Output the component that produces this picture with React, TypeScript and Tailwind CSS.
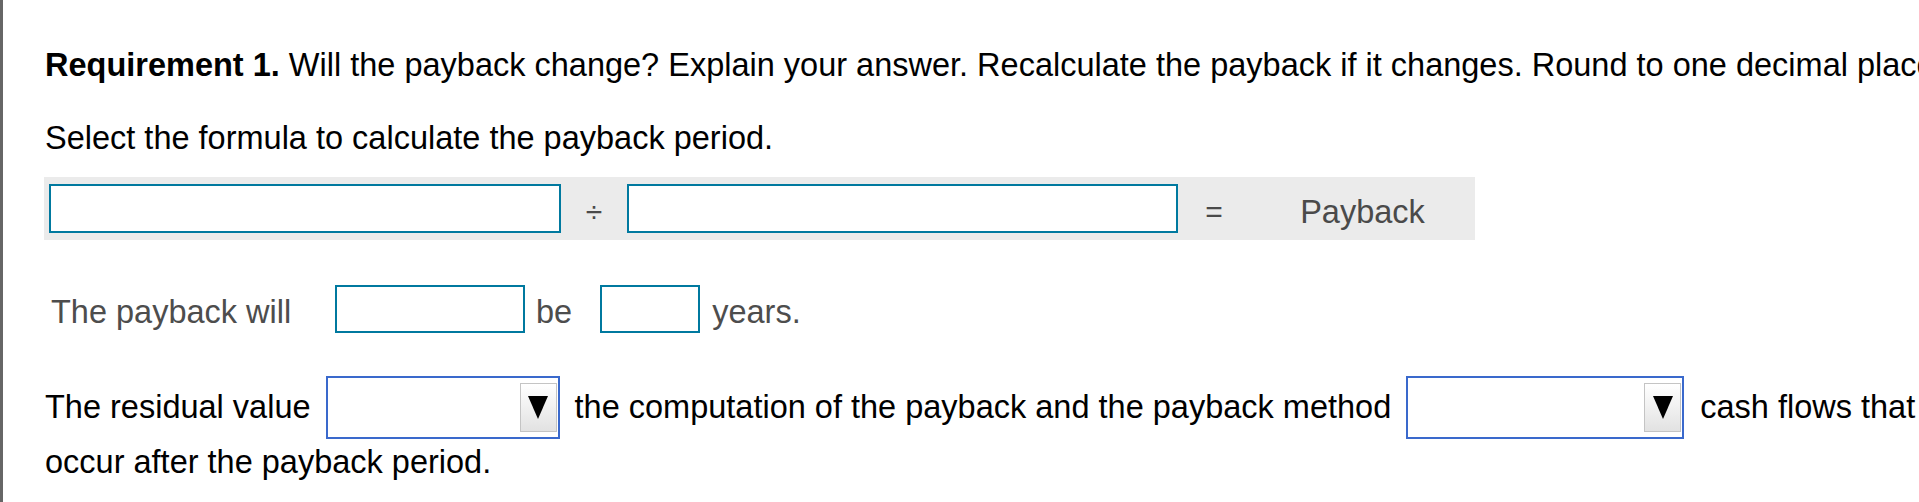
import React from 'react';

const AnswerBox = ({ className }: { className: string }) => (
  <div className={`h-[48px] shrink-0 border-2 border-[#00799f] bg-white ${className}`} />
);

const DropDown = ({ className }: { className: string }) => (
  <div className={`flex h-[63px] shrink-0 items-center justify-end border-2 border-[#3a69cc] bg-white pr-[1px] ${className}`}>
    <div className="flex h-[49px] w-[37px] items-center justify-center border-[1.5px] border-[#c4c4c4] bg-gradient-to-b from-white to-[#e2e2e2]">
      <svg width="20" height="23" viewBox="0 0 20 23">
        <polygon points="0,0 20,0 10,23" fill="#000" />
      </svg>
    </div>
  </div>
);

export default function App() {
  return (
    <div className="min-h-screen w-full overflow-hidden border-l-[3px] border-[#666666] bg-white font-['Liberation_Sans',Arial,sans-serif] text-[32.5px] leading-[37px] text-black">
      <div className="pl-[42px] pt-[47px]">
        <p className="whitespace-nowrap">
          <b>Requirement 1.</b> Will the payback change? Explain your answer. Recalculate the payback if it changes. Round to one decimal place.
        </p>
        <p className="mt-[36px] whitespace-nowrap">Select the formula to calculate the payback period.</p>

        {/* Formula row */}
        <div className="-ml-[1px] mt-[20px] flex h-[63px] w-[1431px] items-center bg-[#ebebeb] pl-[5px] text-[#4a4a4a]">
          <div className="h-[49px] w-[512px] shrink-0 border-2 border-[#00799f] bg-white" />
          <div className="w-[66px] shrink-0 pt-[5px] text-center text-[30px]">÷</div>
          <div className="h-[49px] w-[551px] shrink-0 border-2 border-[#00799f] bg-white" />
          <div className="w-[72px] shrink-0 pt-[5px] text-center text-[30px]">=</div>
          <div className="w-[225px] shrink-0 pt-[8px] text-center">Payback</div>
        </div>

        {/* Payback change row */}
        <div className="mt-[45px] flex h-[48px] items-center text-[#4d4d4d]">
          <span className="ml-[6px] w-[284px] shrink-0 whitespace-nowrap pt-[6px]">The payback will</span>
          <AnswerBox className="w-[190px]" />
          <span className="ml-[11px] pt-[6px]">be</span>
          <AnswerBox className="ml-[28px] w-[100px]" />
          <span className="ml-[12px] pt-[6px]">years.</span>
        </div>

        {/* Residual value sentence */}
        <div className="mt-[43px] flex h-[63px] items-center whitespace-nowrap">
          <span>The residual value</span>
          <DropDown className="ml-[15px] w-[234px]" />
          <span className="ml-[15px]">the computation of the payback and the payback method</span>
          <DropDown className="ml-[15px] w-[278px]" />
          <span className="ml-[16px]">cash flows that</span>
        </div>
        <p className="mt-[5px] whitespace-nowrap">occur after the payback period.</p>
      </div>
    </div>
  );
}
